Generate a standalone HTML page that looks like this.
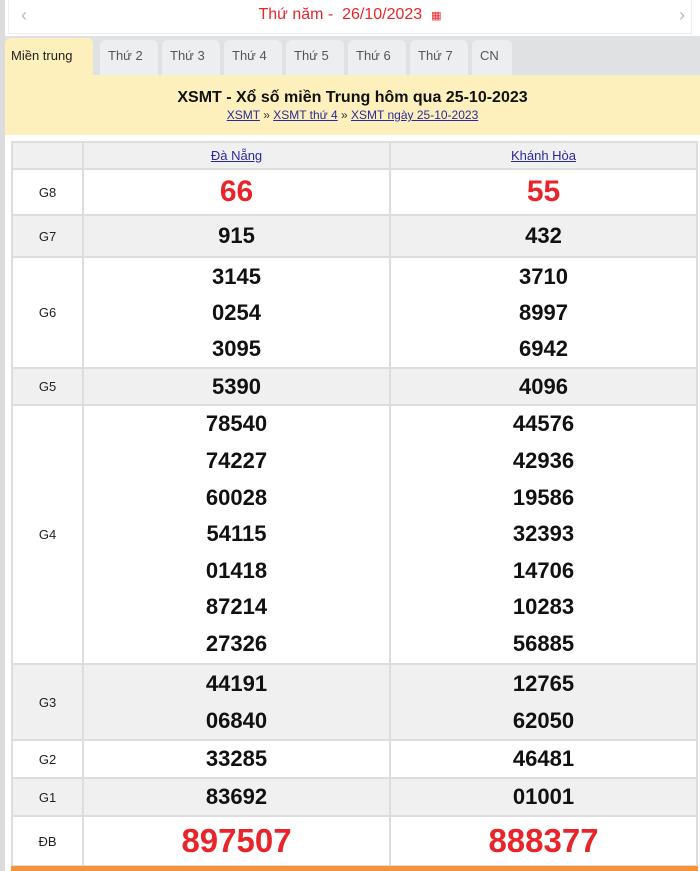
<!DOCTYPE html>
<html><head><meta charset="utf-8"><style>
*{margin:0;padding:0;box-sizing:border-box}
body{width:700px;height:871px;background:#fff;font-family:"Liberation Sans",Arial,sans-serif;position:relative;overflow:hidden}
.strip{position:absolute;left:0;top:0;width:5px;height:871px;background:#dcdcdc}
.top{position:absolute;left:8px;top:0;width:684px;height:34px;border:1px solid #eee;border-top:none;background:#fff;text-align:center;color:#e8252a;font-size:16px;line-height:30px}
.top .l,.top .r{position:absolute;top:0;color:#bbb;font-size:18px}
.top .l{left:12px}.top .r{right:6px}
.tabs{position:absolute;left:5px;top:36px;width:695px;height:39px;background:#dfe1e3}
.tab{position:absolute;top:4px;height:35px;background:#eceeef;border-radius:6px 6px 0 0;font-size:13px;color:#555;line-height:32px;padding-left:8px}
.tab.a{background:#fdf0bd;color:#222;left:0;width:88px;padding-left:6px;top:2px;height:37px;line-height:36px}
.yel{position:absolute;left:5px;top:75px;width:695px;height:60px;background:#fdf0bd;text-align:center}
.yel h1{font-size:16px;font-weight:bold;color:#111;margin-top:13px;line-height:20px}
.yel p{font-size:12px;color:#333;line-height:14px}
.yel a{color:#2a2a9a;text-decoration:underline}
table{position:absolute;left:11px;top:141px;width:687px;border-collapse:collapse;table-layout:fixed}
td{border:2px solid #ddd;text-align:center;vertical-align:middle;padding:0;overflow:hidden}
td.g{width:71px;font-size:13px;color:#222}
td.c1{width:307px}
.gr td{background:#f0f0f0}
.n{font-size:22px;font-weight:bold;color:#111;line-height:37px}
.s .n{line-height:30px}
.g6 .n{line-height:36px}
.g4 .n{line-height:36.6px}
.red{color:#e8252a}
.hd a{color:#2a2a9a;font-size:13px;text-decoration:underline}
.bot{position:absolute;left:11px;top:866px;width:687px;height:5px;background:#f7923a}
</style></head><body>
<div class="strip"></div>
<div class="top"><span class="l">‹</span>Thứ năm - &nbsp;26/10/2023 &nbsp;<span style="font-size:11px">▦</span><span class="r">›</span></div>
<div class="tabs">
<div class="tab a">Miền trung</div>
<div class="tab" style="left:95px;width:58px">Thứ 2</div>
<div class="tab" style="left:157px;width:58px">Thứ 3</div>
<div class="tab" style="left:219px;width:58px">Thứ 4</div>
<div class="tab" style="left:281px;width:58px">Thứ 5</div>
<div class="tab" style="left:343px;width:58px">Thứ 6</div>
<div class="tab" style="left:405px;width:58px">Thứ 7</div>
<div class="tab" style="left:467px;width:40px">CN</div>
</div>
<div class="yel"><h1>XSMT - Xổ số miền Trung hôm qua 25-10-2023</h1>
<p><a>XSMT</a> » <a>XSMT thứ 4</a> » <a>XSMT ngày 25-10-2023</a></p></div>
<table>
<tr class="gr hd" style="height:27px"><td class="g"></td><td class="c1"><a>Đà Nẵng</a></td><td><a>Khánh Hòa</a></td></tr>
<tr class="s" style="height:46px"><td class="g">G8</td><td class="c1"><div class="n red" style="font-size:30px">66</div></td><td><div class="n red" style="font-size:30px">55</div></td></tr>
<tr class="gr s" style="height:42px"><td class="g">G7</td><td class="c1"><div class="n">915</div></td><td><div class="n">432</div></td></tr>
<tr class="g6" style="height:111px"><td class="g">G6</td><td class="c1"><div class="n">3145</div><div class="n">0254</div><div class="n">3095</div></td><td><div class="n">3710</div><div class="n">8997</div><div class="n">6942</div></td></tr>
<tr class="gr s" style="height:37px"><td class="g">G5</td><td class="c1"><div class="n">5390</div></td><td><div class="n">4096</div></td></tr>
<tr class="g4" style="height:259px"><td class="g">G4</td><td class="c1"><div class="n">78540</div><div class="n">74227</div><div class="n">60028</div><div class="n">54115</div><div class="n">01418</div><div class="n">87214</div><div class="n">27326</div></td><td><div class="n">44576</div><div class="n">42936</div><div class="n">19586</div><div class="n">32393</div><div class="n">14706</div><div class="n">10283</div><div class="n">56885</div></td></tr>
<tr class="gr" style="height:74px"><td class="g">G3</td><td class="c1"><div class="n">44191</div><div class="n">06840</div></td><td><div class="n">12765</div><div class="n">62050</div></td></tr>
<tr class="s" style="height:38px"><td class="g">G2</td><td class="c1"><div class="n">33285</div></td><td><div class="n">46481</div></td></tr>
<tr class="gr s" style="height:38px"><td class="g">G1</td><td class="c1"><div class="n">83692</div></td><td><div class="n">01001</div></td></tr>
<tr class="s" style="height:50px"><td class="g">ĐB</td><td class="c1"><div class="n red" style="font-size:33px;line-height:40px">897507</div></td><td><div class="n red" style="font-size:33px;line-height:40px">888377</div></td></tr>
</table>
<div class="bot"></div>
</body></html>
